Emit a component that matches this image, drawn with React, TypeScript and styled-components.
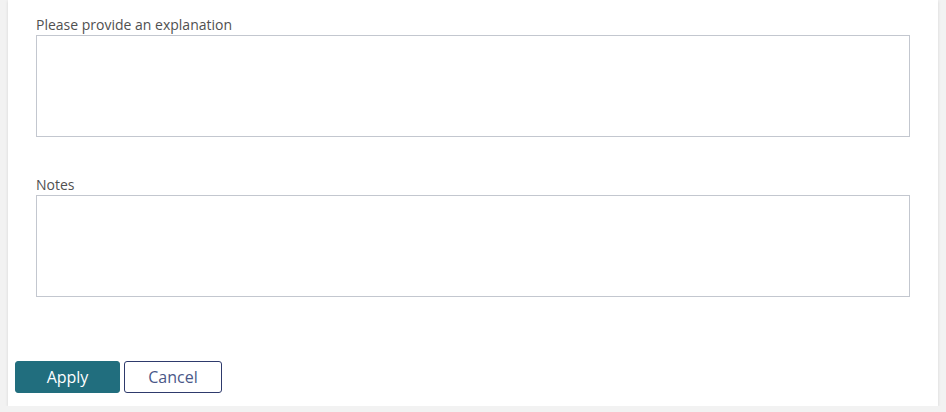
import React from "react";
import styled, { createGlobalStyle } from "styled-components";

const Global = createGlobalStyle`
  html, body { margin: 0; padding: 0; background: #f2f2f2; }
  body { font-family: "Open Sans", "Liberation Sans", sans-serif; }
`;

const Panel = styled.div`
  margin-left: 8px;
  width: 930px;
  height: 406px;
  background: #fff;
  box-shadow: 0 1px 3px rgba(0, 0, 0, 0.12);
  box-sizing: border-box;
  display: flex;
  flex-direction: column;
`;

const Fields = styled.div`
  padding: 16px 28px 0 28px;
  display: flex;
  flex-direction: column;
  gap: 39px;
`;

const Field = styled.div`
  display: flex;
  flex-direction: column;
  gap: 1px;
`;

const Label = styled.label`
  font-size: 14px;
  line-height: 18px;
  color: #505050;
`;

const TextArea = styled.textarea`
  box-sizing: border-box;
  width: 874px;
  height: 102px;
  border: 1px solid #c3c7cf;
  border-radius: 0;
  resize: none;
  padding: 4px 6px;
  font-family: inherit;
  font-size: 13px;
  outline: none;
  margin: 0;
  display: block;
`;

const Actions = styled.div`
  margin-top: 64px;
  padding-left: 7px;
  display: flex;
  gap: 4px;
`;

const Button = styled.button<{ $primary?: boolean }>`
  box-sizing: border-box;
  height: 32px;
  width: ${(p) => (p.$primary ? "105px" : "98px")};
  border-radius: 3px;
  font-family: "Open Sans", "Liberation Sans", sans-serif;
  font-size: 16px;
  padding: 0;
  cursor: pointer;
  background: ${(p) => (p.$primary ? "#216e7e" : "#fff")};
  color: ${(p) => (p.$primary ? "#fff" : "#4a5788")};
  border: 1px solid ${(p) => (p.$primary ? "#216e7e" : "#2e3a6c")};
`;

export default function App() {
  return (
    <>
      <Global />
      <Panel>
        <Fields>
          <Field>
            <Label>Please provide an explanation</Label>
            <TextArea />
          </Field>
          <Field>
            <Label>Notes</Label>
            <TextArea />
          </Field>
        </Fields>
        <Actions>
          <Button $primary>Apply</Button>
          <Button>Cancel</Button>
        </Actions>
      </Panel>
    </>
  );
}
